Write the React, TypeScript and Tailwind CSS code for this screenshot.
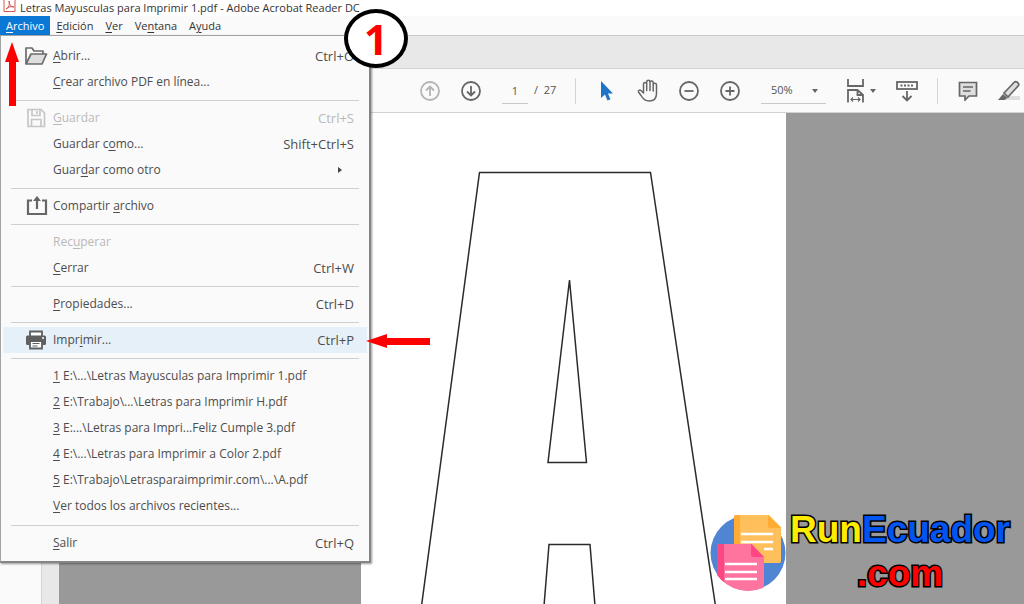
import React, { useState } from 'react';

type MenuEntry = {
  label: string;
  shortcut?: string;
  icon?: React.ReactNode;
  disabled?: boolean;
  submenu?: boolean;
};

const FolderIcon = () => (
  <svg viewBox="0 0 24 20" className="h-5 w-6" fill="none" stroke="#6b6b6b" strokeWidth="1.7" strokeLinejoin="round">
    <path d="M2 18V2h6l2 3h9v3" />
    <path d="M2 18 7 8h15.500l-4.500 10z" fill="#dedede" />
  </svg>
);

const SaveIcon = () => (
  <svg viewBox="0 0 24 20" className="h-5 w-6" fill="none" stroke="#c6c6c6" strokeWidth="1.7">
    <path d="M4 1.500h13L20.500 5v13.500H4z" />
    <path d="M8 1.500v6h8v-6M13 3v3M7.500 18.500v-7h9.500v7" />
  </svg>
);

const ShareIcon = () => (
  <svg viewBox="0 0 24 20" className="h-5 w-6" fill="none" stroke="#666" strokeWidth="2.2">
    <path d="M8 4.500H4v13.500h18V4.500h-4M13 13V3" />
    <path d="M9 5l4-5 4 5z" fill="#666" stroke="none" />
  </svg>
);

const PrintIcon = () => (
  <svg viewBox="0 0 24 20" className="h-5 w-6">
    <path d="M6 6V1.500h12V6" fill="#fff" stroke="#5f5f5f" strokeWidth="1.800" />
    <rect x="2" y="5.500" width="20" height="9.500" rx="1.500" fill="#5f5f5f" />
    <path d="M6 11h12v7.500H6z" fill="#fff" stroke="#5f5f5f" strokeWidth="1.800" />
    <path d="M8.500 13.500h7M8.500 16h5" stroke="#5f5f5f" strokeWidth="1.200" />
    <circle cx="19" cy="8" r="1" fill="#fff" />
  </svg>
);

// "&" marks the letter used as keyboard mnemonic
const menuTitles = ['&Archivo', '&Edición', '&Ver', 'Ve&ntana', 'A&yuda'];

const groups: MenuEntry[][] = [
  [
    { label: '&Abrir...', shortcut: 'Ctrl+O', icon: <FolderIcon /> },
    { label: '&Crear archivo PDF en línea...' },
  ],
  [
    { label: '&Guardar', shortcut: 'Ctrl+S', icon: <SaveIcon />, disabled: true },
    { label: 'Guardar c&omo...', shortcut: 'Shift+Ctrl+S' },
    { label: 'Guar&dar como otro', submenu: true },
  ],
  [{ label: 'Compartir &archivo', icon: <ShareIcon /> }],
  [
    { label: 'Rec&uperar', disabled: true },
    { label: '&Cerrar', shortcut: 'Ctrl+W' },
  ],
  [{ label: '&Propiedades...', shortcut: 'Ctrl+D' }],
  [{ label: 'Impr&imir...', shortcut: 'Ctrl+P', icon: <PrintIcon /> }],
];

const recentFiles: MenuEntry[] = [
  { label: '&1 E:\\...\\Letras Mayusculas para Imprimir 1.pdf' },
  { label: '&2 E:\\Trabajo\\...\\Letras para Imprimir H.pdf' },
  { label: '&3 E:...\\Letras para Impri...Feliz Cumple 3.pdf' },
  { label: '&4 E:\\...\\Letras para Imprimir a Color 2.pdf' },
  { label: '&5 E:\\Trabajo\\Letrasparaimprimir.com\\...\\A.pdf' },
  { label: '&Ver todos los archivos recientes...' },
];

const Mnemonic = ({ text }: { text: string }) => {
  const at = text.indexOf('&');
  if (at < 0) return <>{text}</>;
  return (
    <>
      {text.slice(0, at)}
      <span className="underline underline-offset-2">{text[at + 1]}</span>
      {text.slice(at + 2)}
    </>
  );
};

const Separator = () => <div role="separator" className="mx-2 mt-[5px] mb-1 border-t border-[#cfcfcf]" />;

const MenuRow = ({ entry, active, onHover }: { entry: MenuEntry; active: boolean; onHover: () => void }) => (
  <button
    type="button"
    role="menuitem"
    disabled={entry.disabled}
    onMouseEnter={onHover}
    className={`flex h-[26px] w-full items-center pr-[13px] text-left ${active ? 'bg-[#e5f0f9]' : ''} ${
      entry.disabled ? 'text-[#b9b9b9]' : 'text-[#4d4d4d]'
    }`}
  >
    <span className="flex w-[50px] justify-end pr-[5px]">{entry.icon}</span>
    <span className="flex-1 whitespace-nowrap">
      <Mnemonic text={entry.label} />
    </span>
    {entry.shortcut && <span className="text-[13px]">{entry.shortcut}</span>}
    {entry.submenu && (
      <svg viewBox="0 0 4 6" className="mr-3 h-[6px] w-1" fill="#444">
        <path d="M0 0 4 3 0 6z" />
      </svg>
    )}
  </button>
);

const FileMenu = () => {
  const [active, setActive] = useState('Impr&imir...');

  const renderRow = (entry: MenuEntry) => (
    <MenuRow key={entry.label} entry={entry} active={active === entry.label} onHover={() => setActive(entry.label)} />
  );

  return (
    <div
      role="menu"
      aria-label="Archivo"
      className="absolute left-0 top-full z-10 w-[371px] border border-r-2 border-b-2 border-[#a3a3a3] border-r-[#858585] border-b-[#858585] bg-[#fafafa] px-[2px] pt-[7px] pb-[5px] text-[12px] leading-5 shadow-[1px_1px_2px_rgba(0,0,0,0.4)]"
    >
      {groups.map((group, i) => (
        <React.Fragment key={i}>
          {group.map(renderRow)}
          <Separator />
        </React.Fragment>
      ))}
      <div className="pb-px">{recentFiles.map(renderRow)}</div>
      <Separator />
      {renderRow({ label: '&Salir', shortcut: 'Ctrl+Q' })}
    </div>
  );
};

const ToolButton = ({ label, className = 'w-5', children }: { label: string; className?: string; children: React.ReactNode }) => (
  <button type="button" aria-label={label} className={`flex h-6 shrink-0 items-center justify-center ${className}`}>
    {children}
  </button>
);

const CircleIcon = ({ d, color = '#666' }: { d: string; color?: string }) => (
  <svg viewBox="0 0 20 20" className="h-5 w-5" fill="none" stroke={color} strokeWidth="1.800">
    <circle cx="10" cy="10" r="9" />
    <path d={d} />
  </svg>
);

const Caret = () => (
  <svg viewBox="0 0 6 4" className="h-1 w-[6px]" fill="#666">
    <path d="M0 0h6L3 4z" />
  </svg>
);

const Divider = () => <div className="h-[26px] w-px shrink-0 bg-[#d4d4d4]" />;

const Toolbar = () => (
  <div
    role="toolbar"
    aria-label="Herramientas"
    className="flex h-[45px] shrink-0 items-center gap-[21px] overflow-hidden border-t border-b border-[#d2d2d2] bg-[#fafafa] pl-[420px] text-[11px] text-[#555]"
  >
    <ToolButton label="Página anterior">
      <CircleIcon d="M10 15V5.500M6 9.500l4-4 4 4" color="#b5b5b5" />
    </ToolButton>
    <ToolButton label="Página siguiente">
      <CircleIcon d="M10 5v9.500M6 10.500l4 4 4-4" />
    </ToolButton>
    <div className="flex shrink-0 items-center gap-[6px]">
      <input
        aria-label="Página"
        defaultValue="1"
        className="h-[26px] w-[26px] border-b border-[#c8c8c8] bg-transparent text-center outline-none"
      />
      <span className="w-5 whitespace-nowrap">/&nbsp; 27</span>
    </div>
    <Divider />
    <ToolButton label="Seleccionar">
      <svg viewBox="0 0 20 20" className="h-5 w-5">
        <path d="M4 0v17l4-3.500 2.500 6 3-1.300-2.600-5.700H16z" fill="#1f74c9" />
      </svg>
    </ToolButton>
    <ToolButton label="Mano">
      <svg viewBox="0 0 22 24" className="h-6 w-[22px] shrink-0" fill="none" stroke="#666" strokeWidth="1.500" strokeLinecap="round" strokeLinejoin="round">
        <path d="M6.500 13V5a1.500 1.500 0 0 1 3.200 0v6.500V3a1.500 1.500 0 0 1 3.300 0v8.500V3.500a1.500 1.500 0 0 1 3.200 0V12V6a1.500 1.500 0 0 1 3.300 0v8.500c0 5-3 7.500-7.500 7.500-4 0-6-2-8-5.500L1.500 13c-.6-1.500 1.200-2.500 2.500-1.500L6.500 14z" />
      </svg>
    </ToolButton>
    <ToolButton label="Reducir">
      <CircleIcon d="M5.500 10h9" />
    </ToolButton>
    <ToolButton label="Ampliar">
      <CircleIcon d="M5.500 10h9M10 5.500v9" />
    </ToolButton>
    <div className="relative flex shrink-0 items-center">
      <select
        aria-label="Zoom"
        defaultValue="50%"
        className="h-[26px] w-[65px] appearance-none border-b border-[#c8c8c8] bg-transparent pl-[10px] outline-none"
      >
        <option>50%</option>
        <option>75%</option>
        <option>100%</option>
      </select>
      <span className="pointer-events-none absolute right-2">
        <Caret />
      </span>
    </div>
    <ToolButton label="Ajustar página" className="w-[29px] gap-[6px]">
      <svg viewBox="0 0 17 24" className="h-6 w-[17px] shrink-0" fill="none" stroke="#666" strokeWidth="1.800">
        <path d="M1 0v7h15V0M1 23.500V11h9.500l5.500 5v7.500M10.500 11v5H16" />
        <path d="M3.500 20.500h10M6 18.500l-2 2 2 2M11 18.500l2 2-2 2" strokeWidth="1.200" />
      </svg>
      <Caret />
    </ToolButton>
    <div className="flex shrink-0 items-center gap-5">
      <ToolButton label="Modo de lectura">
        <svg viewBox="0 0 22 22" className="h-[22px] w-[22px] shrink-0" fill="none" stroke="#666" strokeWidth="1.800">
          <rect x="1" y="2" width="20" height="7" />
          <path d="M4.500 5.500h13" strokeDasharray="2 1.500" />
          <path d="M11 11v9M6.500 16l4.500 4.500 4.500-4.500" />
        </svg>
      </ToolButton>
      <Divider />
      <ToolButton label="Comentario">
        <svg viewBox="0 0 20 20" className="h-5 w-5" fill="#dedede" stroke="#666" strokeWidth="1.700">
          <path d="M1.500 1.500h17V15h-7.500l-4 4v-4H1.500z" />
          <path d="M5 6h10M5 10h7.500" strokeWidth="1.300" />
        </svg>
      </ToolButton>
      <ToolButton label="Resaltar" className="w-[22px]">
        <svg viewBox="0 0 22 22" className="h-[22px] w-[22px]">
          <path d="M9 16h13v4H6z" fill="#dedede" />
          <path d="m6 13 10.500-11c1.500-1.300 5 1.200 4 3.500L10 17z" fill="#dedede" stroke="#666" strokeWidth="1.700" />
          <path d="m5 14 4.500 4-3 2H0z" fill="#666" />
        </svg>
      </ToolButton>
    </div>
  </div>
);

const Page = () => (
  <div className="ml-[302px] w-[425px] shrink-0 bg-white">
    <svg viewBox="361 113 425 491" className="block w-full" fill="none" stroke="#2b2b2b" strokeWidth="1.500">
      <path d="M421.500 606 479.500 172.500H650.500L715.500 606" />
      <path d="M569.500 280 548 462.500H586.500z" />
      <path d="M544 606 549 544.500H590L595 606" />
    </svg>
  </div>
);

const DocsLogo = () => (
  <svg viewBox="0 0 76 77" className="h-[77px] w-[76px] shrink-0">
    <defs>
      <clipPath id="disc">
        <path d="M0 0h76v39a38 38 0 0 1-76 0z" />
      </clipPath>
    </defs>
    <circle cx="38" cy="39" r="37.500" fill="#5085d3" />
    <g clipPath="url(#disc)">
      <path d="M26 1h33l12 12v34a2 2 0 0 1-2 2H24V3a2 2 0 0 1 2-2z" fill="#ffc05c" />
      <path d="M26 1h4v48h-6V3a2 2 0 0 1 2-2zM58 1l13 13H60a2 2 0 0 1-2-2z" fill="#ffab34" />
      <path d="M31 20h32M31 28h32M54 35h9" stroke="#fff" strokeWidth="2.600" />
      <path d="M9 30h33l12 13v34H7V32a2 2 0 0 1 2-2z" fill="#ff739f" />
      <path d="M9 30h5v47H7V32a2 2 0 0 1 2-2zM41 30l13 13H43a2 2 0 0 1-2-2z" fill="#ff4684" />
      <path d="M15 50h32M15 58h32M15 65h32" stroke="#fff" strokeWidth="2.600" />
    </g>
  </svg>
);

const Watermark = () => (
  <div className="absolute right-[14px] bottom-2 flex items-center gap-1 font-['Liberation_Sans',Arial,sans-serif] text-[37px] leading-[44px] font-bold [-webkit-text-stroke:3px_#000] [paint-order:stroke_fill] [stroke-linejoin:round]">
    <DocsLogo />
    <div className="text-center">
      <div>
        <span className="text-[#ffeb00]">Run</span>
        <span className="text-[#0055f0]">Ecuador</span>
      </div>
      <div className="text-[#ff0000]">.com</div>
    </div>
  </div>
);

const Annotations = () => (
  <div className="pointer-events-none">
    <svg viewBox="0 0 14 64" className="absolute top-[42px] left-[5px] z-20 h-16 w-[14px]" fill="#ff0000">
      <path d="M7 0l7 20h-3v44H4V20H0z" />
    </svg>
    <svg viewBox="0 0 64 14" className="absolute top-[334px] left-[366px] z-20 h-[14px] w-16" fill="#ff0000">
      <path d="M0 7 21 0v4h43v7H21v3z" />
    </svg>
    <div className="absolute top-[9px] left-[344px] z-20 flex h-[59px] w-16 items-center justify-center rounded-[50%] border-4 border-black bg-white text-[42px] leading-none font-bold text-[#ff0000]">
      1
    </div>
  </div>
);

export default function App() {
  return (
    <div className="relative flex h-screen flex-col overflow-hidden bg-[#fafafa] font-['Open_Sans','Noto_Sans',sans-serif] text-[#333]">
      <header className="flex h-4 shrink-0 items-start gap-1 bg-white pl-[3px] text-[11px] leading-[15px]">
        <svg viewBox="0 0 13 14" className="h-[14px] w-[13px] shrink-0" fill="#fff" stroke="#d9534f">
          <path d="M1 0v11.500h11V0" />
          <path d="M3 9c3-1 4-5 3-8 0 4 2 6 5 6-3-1-6 0-8 2z" fill="none" />
        </svg>
        <h1 className="whitespace-nowrap">Letras Mayusculas para Imprimir 1.pdf - Adobe Acrobat Reader DC</h1>
      </header>
      <nav className="relative flex h-[19px] shrink-0 bg-[#fafafa] text-[11px] leading-[18px]" role="menubar">
        {menuTitles.map((title, i) => (
          <button
            key={title}
            type="button"
            role="menuitem"
            className={`px-[6px] ${i === 0 ? 'bg-[#0c78d6] text-white' : ''}`}
          >
            <Mnemonic text={title} />
          </button>
        ))}
        <FileMenu />
      </nav>
      <div className="h-[33px] shrink-0 border-t border-[#c9c9c9] bg-[#e8e8e8]" />
      <Toolbar />
      <main className="flex min-h-0 flex-1">
        <aside className="w-[41px] shrink-0 bg-[#fafafa]" />
        <div className="w-[18px] shrink-0 border-l border-[#d5d5d5] bg-[#e8e8e8]" />
        <div className="flex min-w-0 flex-1 overflow-hidden bg-[#999]">
          <Page />
        </div>
      </main>
      <Annotations />
      <Watermark />
    </div>
  );
}
